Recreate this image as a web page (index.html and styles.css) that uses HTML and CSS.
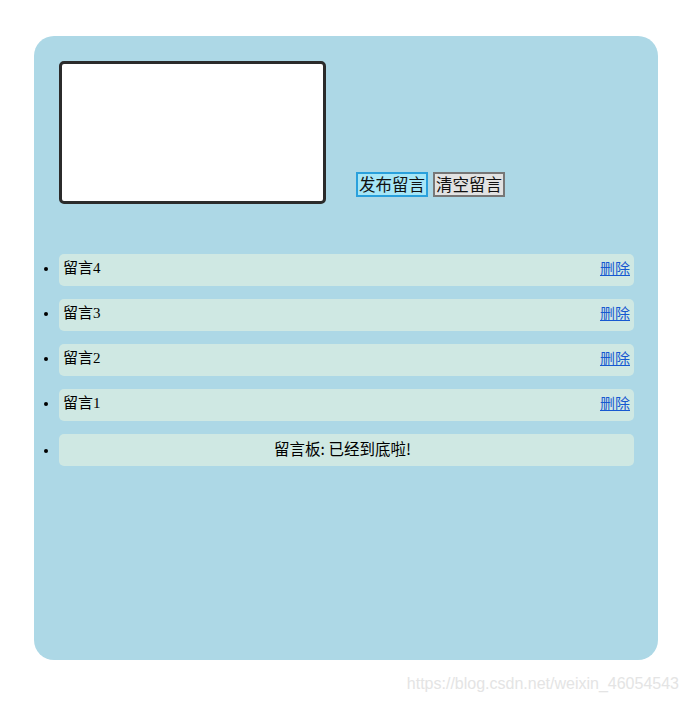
FILE: index.html
```html
<!DOCTYPE html>
<html lang="zh">
<head>
<meta charset="utf-8">
<title>留言板</title>
<link rel="stylesheet" href="styles.css">
</head>
<body>
<div class="board">
  <div class="composer">
    <textarea class="input"></textarea>
    <div class="actions">
      <button class="btn btn-post">发布留言</button>
      <button class="btn btn-clear">清空留言</button>
    </div>
  </div>
  <ul class="list">
    <li class="item"><span class="msg">留言4</span><a class="del" href="#">删除</a></li>
    <li class="item"><span class="msg">留言3</span><a class="del" href="#">删除</a></li>
    <li class="item"><span class="msg">留言2</span><a class="del" href="#">删除</a></li>
    <li class="item"><span class="msg">留言1</span><a class="del" href="#">删除</a></li>
    <li class="item item-end"><span class="end-text">留言板: 已经到底啦!</span></li>
  </ul>
</div>
<div class="watermark">https://blog.csdn.net/weixin_46054543</div>
</body>
</html>
```
FILE: styles.css
```css
html, body {
  margin: 0;
  padding: 0;
  background: #ffffff;
}
body {
  width: 689px;
  height: 703px;
  position: relative;
  overflow: hidden;
  font-family: "Liberation Serif", "Noto Sans CJK SC", serif;
  font-size: 16px;
  color: #000;
}
.board {
  box-sizing: border-box;
  margin: 36px 0 0 34px;
  width: 624px;
  height: 624px;
  background: #add8e6;
  border-radius: 20px;
  padding: 25px 24px 0 25px;
}
.composer {
  display: flex;
  align-items: flex-end;
  gap: 30px;
}
.input {
  box-sizing: border-box;
  width: 267px;
  height: 143px;
  margin: 0;
  border: 3px solid #2b2b2b;
  border-radius: 5px;
  background: #fff;
  resize: none;
  outline: none;
}
.actions {
  display: flex;
  gap: 5px;
  margin-bottom: 7px;
}
.btn {
  box-sizing: border-box;
  height: 25px;
  padding: 0 1px;
  margin: 0;
  font-family: "Noto Sans CJK SC", sans-serif;
  font-size: 16.5px;
  line-height: 21px;
  color: #111;
  border-radius: 0;
}
.btn-post {
  background: #a6e6f7;
  border: 2px solid #2aa0dc;
}
.btn-clear {
  background: #e2e2e2;
  border: 2px solid #777777;
}
.list {
  margin: 50px 0 0 0;
  padding: 0;
  list-style: disc;
  list-style-position: outside;
}
.item {
  display: list-item;
  margin: 0 0 13px 0;
  height: 32px;
  line-height: 28px;
  padding: 0 4px;
  background: #cfe8e3;
  border-radius: 5px;
  font-size: 15px;
}
.msg {
  float: left;
}
.del {
  float: right;
  color: #1759d1;
  text-decoration: underline;
  font-family: "Noto Sans CJK SC", sans-serif;
  font-size: 15px;
}
.item-end {
  text-align: center;
  padding-right: 12px;
}
.end-text {
  font-family: "Noto Sans CJK SC", sans-serif;
  font-size: 15.5px;
}
.watermark {
  position: absolute;
  right: 10px;
  top: 675px;
  font-family: "Liberation Sans", sans-serif;
  font-size: 16px;
  color: #e4e4e4;
}
```
